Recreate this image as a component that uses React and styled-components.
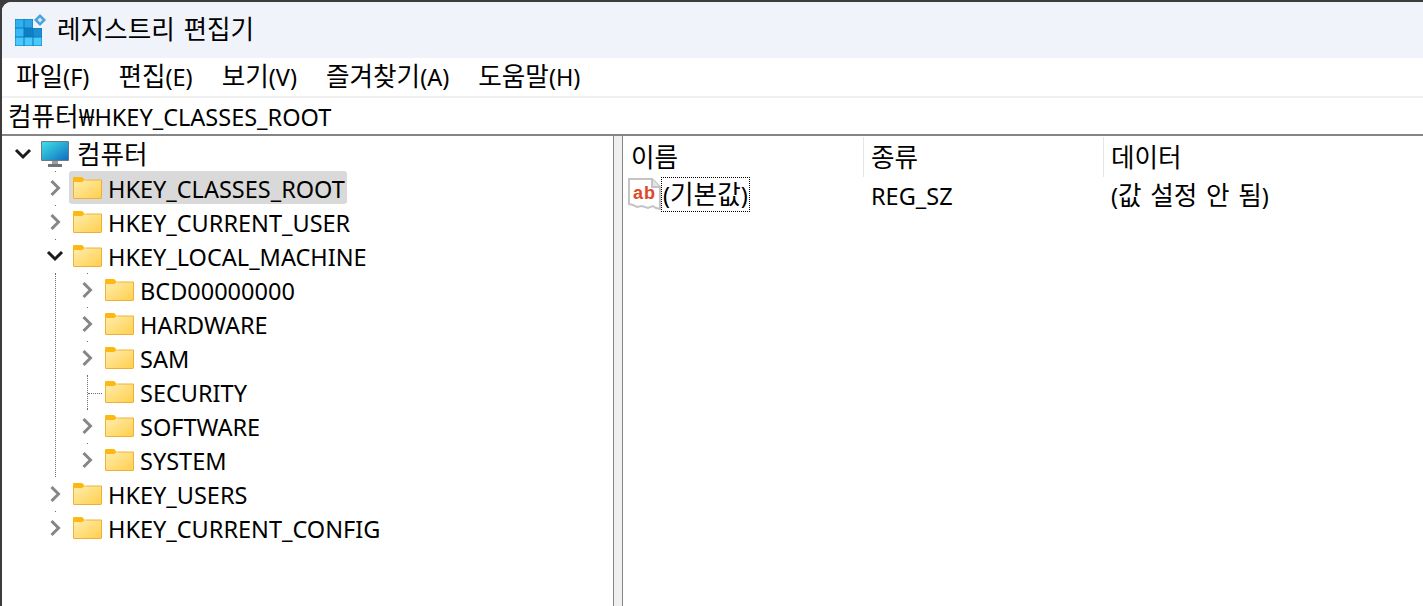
import styled, { createGlobalStyle } from 'styled-components'

const GlobalStyle = createGlobalStyle`
  html, body {
    margin: 0;
    height: 100%;
    overflow: hidden;
    background: #3c3c3c;
  }
  #root {
    height: 100%;
  }
`

const FONT = `"Noto Sans", "Noto Sans CJK KR", sans-serif`

const menus = ['파일(F)', '편집(E)', '보기(V)', '즐겨찾기(A)', '도움말(H)']
const columns = ['이름', '종류', '데이터']

// hangul in the stack runs narrow, so it gets its own size next to the latin text
function Mixed({ text }) {
  return text.split(/([가-힣 ]+)/).filter(Boolean).map((part, i) => (
    /[가-힣]/.test(part) ? <StyledHangul key={i}>{part}</StyledHangul> : part
  ))
}

function RegistryIcon() {
  const cells = [
    [0, 0, '#2fb0ef'], [1, 0, '#2aa6e6'],
    [0, 1, '#36b9f4'], [1, 1, '#0f7fc4'], [2, 1, '#1a8fd2'],
    [0, 2, '#4cc9fb'], [1, 2, '#4cc9fb'], [2, 2, '#4cc9fb'],
  ]
  return (
    <svg width="32" height="32" viewBox="0 0 32 32">
      <path d="M0 5h18v9h9v18h-27z" fill="#0a78bc" />
      {cells.map(([col, row, fill]) => (
        <rect key={`${col}-${row}`} x={col * 9 + .5} y={row * 9 + 5.500} width="8" height="8" fill={fill} />
      ))}
      <path d="M25 0l6 6-6 6-6-6z" fill="#4aa3d8" />
      <path d="M25 3.500l2.500 2.500-2.500 2.500-2.500-2.500z" fill="#cdeaf8" />
    </svg>
  )
}

function ComputerIcon() {
  return (
    <svg width="28" height="26" viewBox="0 0 28 26">
      <defs>
        <linearGradient id="screen" x1="0" y1="0" x2="1" y2="1">
          <stop offset="0" stopColor="#3fe0e6" />
          <stop offset="1" stopColor="#0f6fc0" />
        </linearGradient>
      </defs>
      <rect x="0" y="0" width="28" height="20" rx="1" fill="#6b7a85" />
      <rect x="1" y="1" width="26" height="18" fill="url(#screen)" />
      <rect x="11" y="20" width="6" height="3" fill="#9aa0a6" />
      <rect x="7" y="23" width="14" height="3" fill="#6f7478" />
    </svg>
  )
}

function FolderIcon() {
  return (
    <svg width="29" height="22" viewBox="0 0 29 22">
      <defs>
        <linearGradient id="folder" x1="0" y1="0" x2="1" y2="1">
          <stop offset="0" stopColor="#ffedb0" />
          <stop offset="1" stopColor="#ffcf4a" />
        </linearGradient>
      </defs>
      <path d="M0 3h28v18a1 1 0 0 1-1 1h-26a1 1 0 0 1-1-1z" fill="url(#folder)" />
      <path d="M.5 4v17a.5.5 0 0 0 .5.5h27a.5.5 0 0 0 .5-.5v-18h-16" fill="none" stroke="#eeb03a" />
      <path d="M0 1a1 1 0 0 1 1-1h8l3 3-3 2h-9z" fill="#fdb813" />
    </svg>
  )
}

function ChevronIcon({ open }) {
  return open ? (
    <svg width="18" height="12" viewBox="0 0 18 12">
      <path d="M2 2l7 7 7-7" fill="none" stroke="#1c1c1c" strokeWidth="3" />
    </svg>
  ) : (
    <svg width="12" height="18" viewBox="0 0 12 18">
      <path d="M2.500 2l7 7-7 7" fill="none" stroke="#868686" strokeWidth="3" />
    </svg>
  )
}

function ValueIcon() {
  return (
    <svg width="33" height="33" viewBox="0 0 33 33">
      <path
        d="M1 1h23l8 8v22l-4-1-3-2-5 2-6-2-5 1-4-2-4-1z"
        fill="#fff"
        stroke="#c4c4c4"
        strokeWidth="2"
      />
      <path d="M24 1v8h8" fill="#e4e4e4" stroke="#c4c4c4" strokeWidth="2" />
      <StyledValueGlyph x="5" y="21">ab</StyledValueGlyph>
    </svg>
  )
}

function TreeRow({ label, icon = <FolderIcon />, state, selected, dot }) {
  return (
    <StyledRow>
      <StyledTwisty $dot={dot} $leaf={state === 'leaf'}>
        {state !== 'leaf' && <ChevronIcon open={state === 'open'} />}
      </StyledTwisty>
      <StyledNode $selected={selected}>
        {icon}
        <StyledNodeLabel $wide={icon.type === ComputerIcon}><Mixed text={label} /></StyledNodeLabel>
      </StyledNode>
    </StyledRow>
  )
}

export default function App() {
  return (
    <StyledWindow>
      <GlobalStyle />
      <StyledTitleBar>
        <RegistryIcon />
        <StyledTitle>레지스트리 편집기</StyledTitle>
      </StyledTitleBar>
      <StyledMenuBar>
        {menus.map(menu => <StyledMenu key={menu}><Mixed text={menu} /></StyledMenu>)}
      </StyledMenuBar>
      <StyledAddressBar><span><Mixed text="컴퓨터" />₩HKEY_CLASSES_ROOT</span></StyledAddressBar>
      <StyledPanes>
        <StyledTree>
          <TreeRow label="컴퓨터" icon={<ComputerIcon />} state="open" />
          <StyledGroup>
            <TreeRow label="HKEY_CLASSES_ROOT" selected dot />
            <TreeRow label="HKEY_CURRENT_USER" dot />
            <TreeRow label="HKEY_LOCAL_MACHINE" state="open" dot />
            <StyledGroup $guide>
              <TreeRow label="BCD00000000" dot />
              <TreeRow label="HARDWARE" dot />
              <TreeRow label="SAM" dot />
              <TreeRow label="SECURITY" state="leaf" />
              <TreeRow label="SOFTWARE" dot />
              <TreeRow label="SYSTEM" dot />
            </StyledGroup>
            <TreeRow label="HKEY_USERS" />
            <TreeRow label="HKEY_CURRENT_CONFIG" dot />
          </StyledGroup>
        </StyledTree>
        <StyledSplitter />
        <StyledList>
          <StyledListHeader>
            {columns.map(column => <StyledColumn key={column}><Mixed text={column} /></StyledColumn>)}
          </StyledListHeader>
          <StyledListRow>
            <StyledNameCell>
              <ValueIcon />
              <StyledFocused><Mixed text="(기본값)" /></StyledFocused>
            </StyledNameCell>
            <StyledCell>REG_SZ</StyledCell>
            <StyledCell><Mixed text="(값 설정 안 됨)" /></StyledCell>
          </StyledListRow>
        </StyledList>
      </StyledPanes>
    </StyledWindow>
  )
}

const StyledWindow = styled.div`
  box-sizing: border-box;
  height: 604px;
  margin: 2px 0 0 2px;
  display: flex;
  flex-direction: column;
  background: #fff;
  border-top-left-radius: 9px;
  overflow: hidden;
  font-family: ${FONT};
  font-size: 23.500px;
  color: #000;
`

const StyledHangul = styled.span`
  font-size: 25.600px;
  line-height: 1;
  word-spacing: 2px;
`

const StyledTitleBar = styled.div`
  height: 56px;
  flex: none;
  display: flex;
  align-items: center;
  padding-left: 13px;
  background: #f0f3f9;
`

const StyledTitle = styled.span`
  margin-left: 10px;
  padding-bottom: 5px;
  font-size: 25.600px;
  word-spacing: 2px;
`

const StyledMenuBar = styled.div`
  height: 40px;
  flex: none;
  display: flex;
  align-items: center;
  gap: 29px;
  padding-left: 14px;
  box-sizing: border-box;
  border-bottom: 2px solid #f0f0f0;
`

const StyledMenu = styled.span`
  white-space: nowrap;
`

const StyledAddressBar = styled.div`
  height: 38px;
  flex: none;
  display: flex;
  align-items: center;
  padding: 2px 0 0 6px;
  box-sizing: border-box;
  border-bottom: 2px solid #858585;
`

const StyledPanes = styled.div`
  flex: 1;
  min-height: 0;
  display: flex;
`

const StyledTree = styled.div`
  width: 605px;
  flex: none;
  padding: 1px 0 0 6px;
`

const StyledGroup = styled.div`
  ${props => props.$guide ? `
    margin-left: 15px;
    padding-left: 16px;
    border-left: 1px dotted #6e6e6e;
  ` : `
    padding-left: 32px;
  `}
`

const StyledRow = styled.div`
  height: 34px;
  display: flex;
  align-items: stretch;
`

const StyledTwisty = styled.div`
  position: relative;
  width: 30px;
  margin-right: -1px;
  flex: none;
  display: flex;
  align-items: center;
  justify-content: center;

  ${props => props.$dot && `
    &::before {
      content: '';
      position: absolute;
      top: 0;
      left: 15px;
      width: 1px;
      height: 1px;
      background: #6e6e6e;
    }
  `}

  ${props => props.$leaf && `
    &::before {
      content: '';
      position: absolute;
      top: 0;
      bottom: 0;
      left: 15px;
      border-left: 1px dotted #6e6e6e;
    }
    &::after {
      content: '';
      position: absolute;
      top: 18px;
      left: 16px;
      width: 14px;
      border-top: 1px dotted #6e6e6e;
    }
  `}
`

const StyledNode = styled.div`
  display: flex;
  align-items: center;
  height: 33px;
  padding: 0 2px 0 4px;
  border-radius: 3px;
  background: ${props => props.$selected ? '#d9d9d9' : 'transparent'};
`

const StyledNodeLabel = styled.span`
  margin-left: ${props => props.$wide ? '8px' : '6px'};
  padding-top: 3px;
  white-space: nowrap;
`

const StyledSplitter = styled.div`
  width: 8px;
  flex: none;
  background: #f0f0f0;
  border-left: 1px solid #858585;
  border-right: 1px solid #858585;
`

const StyledList = styled.div`
  flex: 1;
  min-width: 0;
  padding-left: 1px;
`

const StyledListHeader = styled.div`
  height: 41px;
  display: flex;
  align-items: flex-start;
  padding-top: 1px;
  box-sizing: border-box;
`

const StyledColumn = styled.div`
  width: 240px;
  height: 40px;
  box-sizing: border-box;
  flex: none;
  display: flex;
  align-items: center;
  padding: 2px 0 0 7px;
  border-right: 1px solid #e5e5e5;

  &:last-child {
    border-right: none;
  }
`

const StyledListRow = styled.div`
  display: flex;
  align-items: center;
  height: 35px;
`

const StyledCell = styled.div`
  width: 240px;
  flex: none;
  padding: 2px 0 0 7px;
  box-sizing: border-box;
`

const StyledNameCell = styled.div`
  width: 240px;
  flex: none;
  display: flex;
  align-items: center;
  padding-left: 4px;
  box-sizing: border-box;
`

const StyledFocused = styled.span`
  padding: 1px 2px 0;
  line-height: 34px;
  outline: 1px dotted #000;
  outline-offset: -1px;
  white-space: nowrap;
`

const StyledValueGlyph = styled.text`
  font-family: "Liberation Sans", sans-serif;
  font-size: 18px;
  font-weight: 700;
  letter-spacing: 1px;
  fill: #e0482a;
`
